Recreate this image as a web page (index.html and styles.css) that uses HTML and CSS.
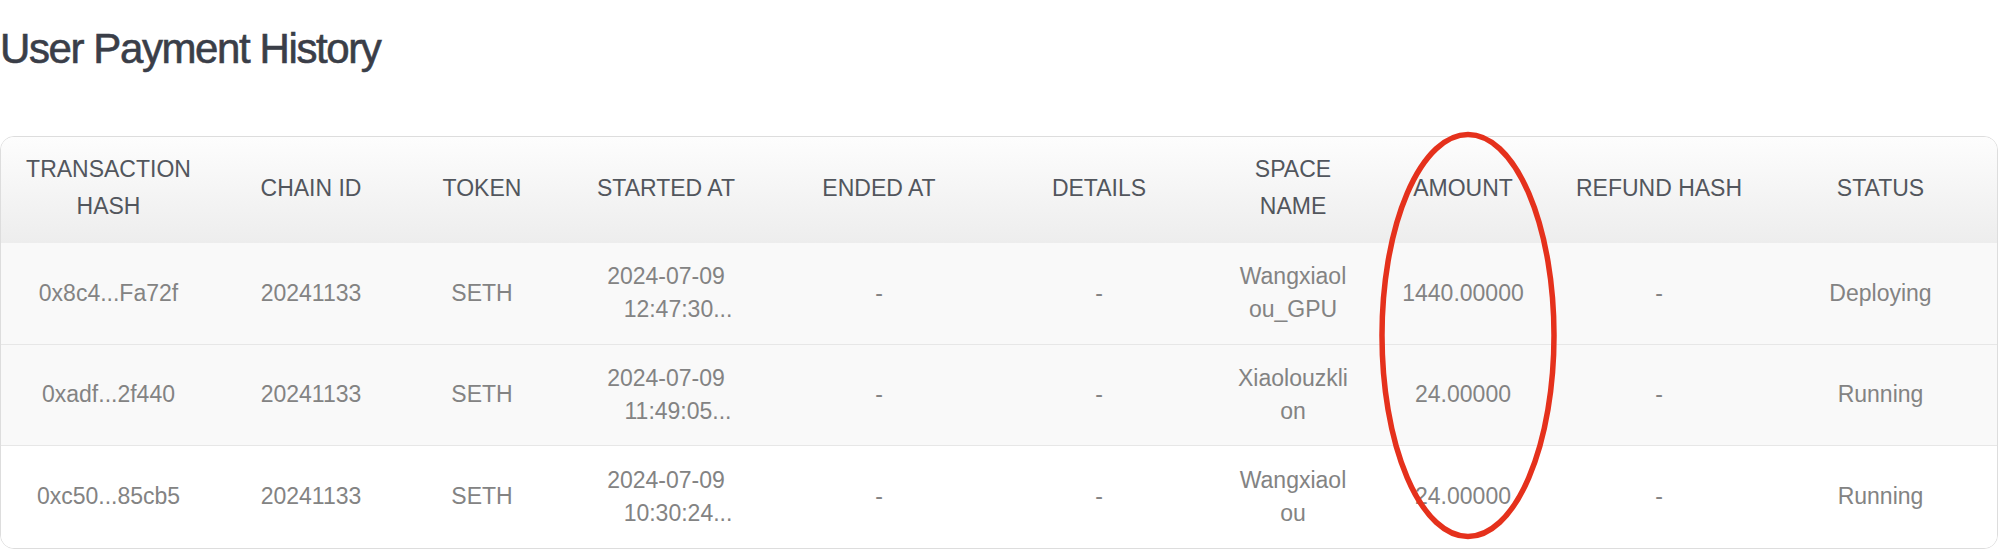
FILE: index.html
```html
<!DOCTYPE html>
<html lang="en">
<head>
<meta charset="utf-8">
<title>User Payment History</title>
<link rel="stylesheet" href="styles.css">
</head>
<body>
<main class="page">
  <h1 class="title">User Payment History</h1>
  <div class="card">
    <table class="history">
      <colgroup>
        <col class="c-hash"><col class="c-chain"><col class="c-token"><col class="c-start"><col class="c-end">
        <col class="c-details"><col class="c-space"><col class="c-amount"><col class="c-refund"><col class="c-status">
      </colgroup>
      <thead>
        <tr>
          <th>TRANSACTION<br>HASH</th>
          <th>CHAIN ID</th>
          <th>TOKEN</th>
          <th>STARTED AT</th>
          <th>ENDED AT</th>
          <th>DETAILS</th>
          <th>SPACE<br>NAME</th>
          <th>AMOUNT</th>
          <th>REFUND HASH</th>
          <th>STATUS</th>
        </tr>
      </thead>
      <tbody>
        <tr class="shaded">
          <td>0x8c4...Fa72f</td>
          <td>20241133</td>
          <td>SETH</td>
          <td><span class="line">2024-07-09</span><span class="line time">12:47:30...</span></td>
          <td>-</td>
          <td>-</td>
          <td><span class="line">Wangxiaol</span><span class="line">ou_GPU</span></td>
          <td>1440.00000</td>
          <td>-</td>
          <td>Deploying</td>
        </tr>
        <tr class="shaded">
          <td>0xadf...2f440</td>
          <td>20241133</td>
          <td>SETH</td>
          <td><span class="line">2024-07-09</span><span class="line time">11:49:05...</span></td>
          <td>-</td>
          <td>-</td>
          <td><span class="line">Xiaolouzkli</span><span class="line">on</span></td>
          <td>24.00000</td>
          <td>-</td>
          <td>Running</td>
        </tr>
        <tr class="last">
          <td>0xc50...85cb5</td>
          <td>20241133</td>
          <td>SETH</td>
          <td><span class="line">2024-07-09</span><span class="line time">10:30:24...</span></td>
          <td>-</td>
          <td>-</td>
          <td><span class="line">Wangxiaol</span><span class="line">ou</span></td>
          <td>24.00000</td>
          <td>-</td>
          <td>Running</td>
        </tr>
      </tbody>
    </table>
  </div>
  <svg class="highlight" width="184" height="416" viewBox="0 0 184 416" aria-hidden="true">
    <ellipse cx="92" cy="207.5" rx="86" ry="201" fill="none" stroke="#e5311c" stroke-width="5.5"/>
  </svg>
</main>
</body>
</html>
```

FILE: styles.css
```css
* { box-sizing: border-box; }

html, body {
  margin: 0;
  padding: 0;
  background: #ffffff;
}

body {
  font-family: "Liberation Sans", Arial, Helvetica, sans-serif;
}

.page {
  position: relative;
  width: 2000px;
}

.title {
  margin: 0;
  padding-top: 25px;
  font-size: 42px;
  line-height: 48px;
  font-weight: 400;
  letter-spacing: -1.4px;
  color: #3a3e48;
  -webkit-text-stroke: 0.6px #3a3e48;
}

.card {
  margin: 63px 2px 0 0;
  border: 1px solid #dddddd;
  border-radius: 14px;
  overflow: hidden;
  background: #ffffff;
}

.history {
  width: 100%;
  border-collapse: collapse;
  table-layout: fixed;
  font-size: 23px;
  text-align: center;
}

.c-hash { width: 215px; }
.c-chain { width: 190px; }
.c-token { width: 152px; }
.c-start { width: 216px; }
.c-end { width: 210px; }
.c-details { width: 230px; }
.c-space { width: 158px; }
.c-amount { width: 182px; }
.c-refund { width: 210px; }
.c-status { width: 233px; }

.history thead tr {
  background: linear-gradient(#fdfdfd, #ededed);
}

.history th {
  padding: 14px 0 18px;
  line-height: 37px;
  font-weight: 400;
  color: #52565d;
  vertical-align: middle;
}

.history td {
  height: 101px;
  padding: 17px 0;
  line-height: 33px;
  color: #838383;
  vertical-align: middle;
  border-bottom: 1px solid #e7e7e7;
}

.history tr.shaded { background: #f9f9f9; }
.history tr.last { background: #ffffff; }
.history tr.last td { border-bottom: 0; height: 103px; }

.line { display: block; }
.line.time { padding-left: 24px; }

.highlight {
  position: absolute;
  left: 1376px;
  top: 128px;
  overflow: visible;
}
```
